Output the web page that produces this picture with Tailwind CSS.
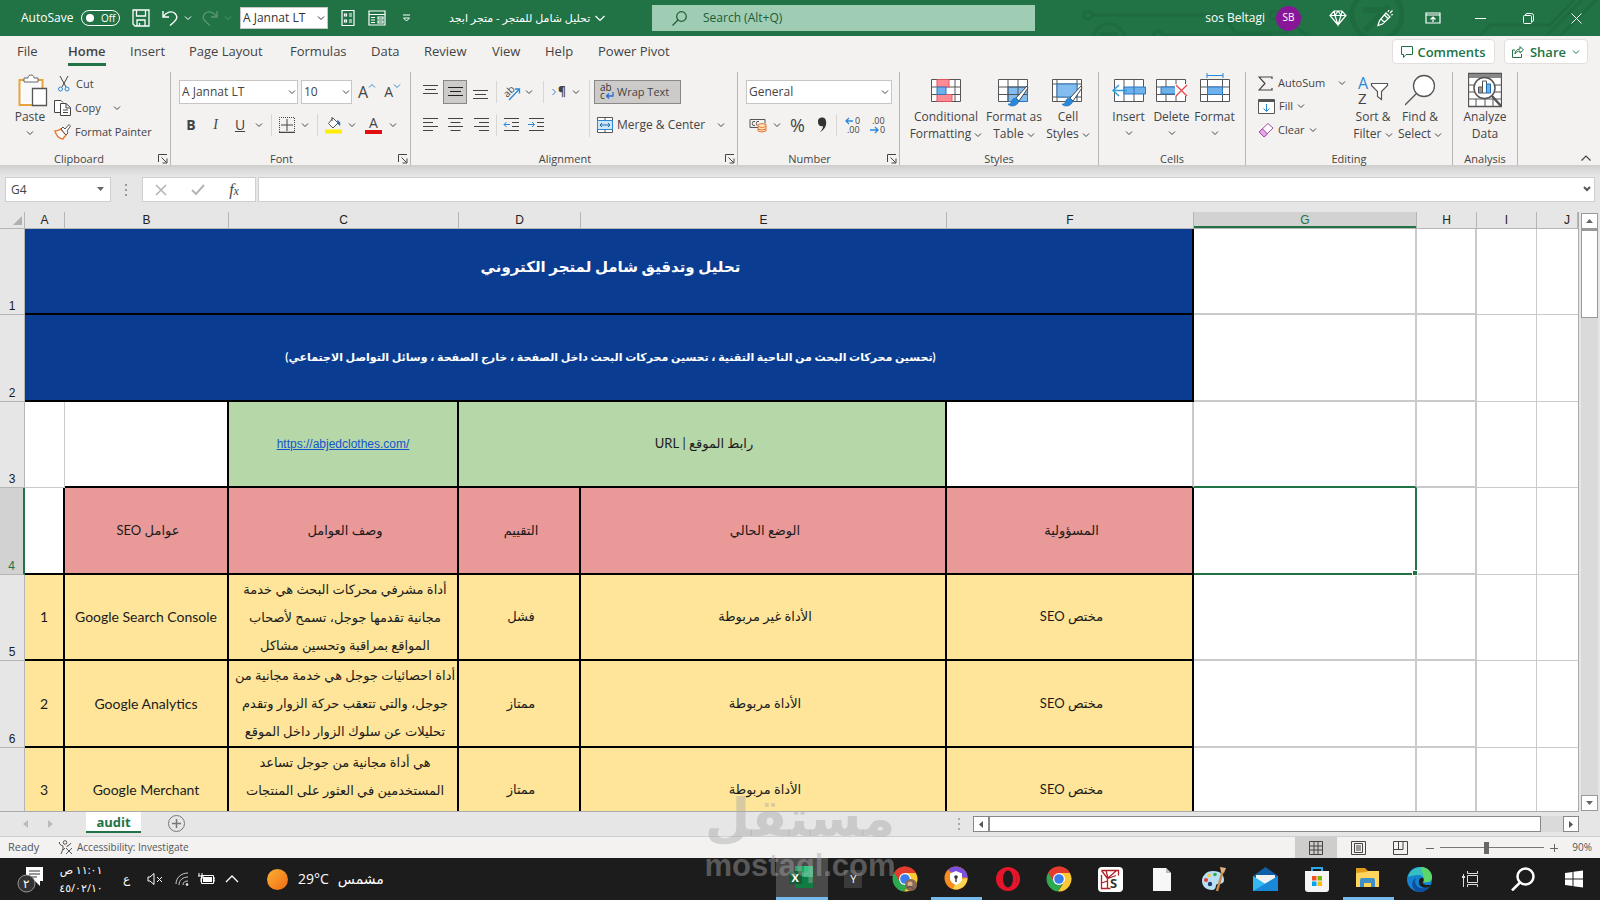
<!DOCTYPE html>
<html lang="en">
<head>
  <meta charset="UTF-8">
  <meta name="viewport" content="width=device-width, initial-scale=1.0">
  <title>تحليل شامل للمتجر - متجر ابجد</title>
  <script src="https://cdn.jsdelivr.net/npm/@tailwindcss/browser@4"></script>
</head>
<body class="h-screen overflow-hidden flex flex-col bg-[#e6e6e6] text-[#444] text-xs font-['Open_Sans','DejaVu_Sans',sans-serif]">

  <!-- shared icons -->
  <svg class="hidden">
    <symbol id="chev" viewBox="0 0 8 8"><path d="M1 2.500l3 3 3-3" fill="none" stroke="currentColor"/></symbol>
    <symbol id="launch" viewBox="0 0 10 10"><path d="M.5 8V.5H9M3.500 3.500l5 5M9 4.500V9H4.500" fill="none" stroke="currentColor"/></symbol>
    <symbol id="brush" viewBox="0 0 24 24"><path d="M22 1L11 13l3 3L23 3z" fill="#fff" stroke="#444"/><path d="M11 13c-4 0-4 3-5 5-1 1-2 1-3 1 2 3 9 3 11-3z" fill="#2b88d8" stroke="#1b6bb0" stroke-width=".7"/></symbol>
    <symbol id="chrome" viewBox="0 0 26 26">
      <path d="M13 13L2.200 6.800A12.500 12.500 0 0 1 23.800 6.800z" fill="#e33b2e"/>
      <path d="M13 13V.5M2.200 6.800A12.500 12.500 0 0 0 12 25.500L18 15z" fill="#2da94f"/>
      <path d="M13 7h10.900A12.500 12.500 0 0 1 12 25.500L18 16z" fill="#fcc934"/>
      <path d="M2.200 6.800A12.500 12.500 0 0 1 23.900 7H13l-5 9z" fill="#e33b2e"/>
      <circle cx="13" cy="13" r="6" fill="#fff"/><circle cx="13" cy="13" r="4.800" fill="#3b7ded"/>
    </symbol>
  </svg>

  <!-- title bar -->
  <header class="relative h-9 shrink-0 flex items-center bg-[#217346] text-white">
    <svg class="absolute right-0 top-0 h-9 w-[520px]" viewBox="0 0 520 36" fill="none" stroke="#1e6b40" stroke-width="3">
      <circle cx="8" cy="15" r="4"/><path d="M12 15h130l14 18h50l16-18"/><circle cx="29" cy="40" r="16"/><path d="M20 34h18"/><circle cx="78" cy="35" r="4"/><path d="M82 35h110"/>
      <circle cx="194" cy="15" r="4"/><path d="M198 17l30 18"/><circle cx="297" cy="15" r="25" stroke-width="5"/><path d="M283 10h26M309 6l-24 25" stroke-width="6"/>
      <path d="M400 36l10-11h60l24-25M466 36l36-36M480 36l36-36"/>
    </svg>
    <div class="relative flex items-center w-[420px] shrink-0 pl-[21px]">
      <label for="autosave" class="w-[60px]">AutoSave</label>
      <button id="autosave" class="w-[39px] h-4 rounded-full border border-white flex items-center gap-[7px] pl-1 text-[10px] leading-none"><span class="size-2 rounded-full bg-white"></span>Off</button>
      <button class="ml-3" aria-label="Save"><svg class="size-[18px]" viewBox="0 0 18 18" fill="none" stroke="#fff" stroke-width="1.300"><path d="M1 1h16v16H3l-2-2zM4.500 1v6h9V1M5 17v-6h8v6M7.500 17v-3"/></svg></button>
      <button class="ml-3" aria-label="Undo"><svg class="size-4" viewBox="0 0 16 16" fill="none" stroke="#fff" stroke-width="1.400"><path d="M1 1v6h6M1.500 6.500C4 2 10 .500 13 3.500s2 6-1 8.500l-4 3.500"/></svg></button>
      <svg class="size-2 ml-[6px]"><use href="#chev"/></svg>
      <button class="ml-[10px] opacity-25" aria-label="Redo"><svg class="size-4" viewBox="0 0 16 16" fill="none" stroke="#fff" stroke-width="1.400"><path d="M15 1v6H9M14.500 6.500C12 2 6 .500 3 3.500s-2 6 1 8.500l4 3.500"/></svg></button>
      <svg class="size-2 ml-[6px] opacity-25"><use href="#chev"/></svg>
      <div class="relative ml-2 text-[#333]">
        <select aria-label="Quick font" class="appearance-none w-[88px] h-[22px] bg-white border border-[#c8c8c8] px-[2px]"><option>A Jannat LT</option></select>
        <svg class="absolute right-[3px] top-[7px] size-2"><use href="#chev"/></svg>
      </div>
      <button class="ml-[13px]" aria-label="Form"><svg class="w-[14px] h-[18px]" viewBox="0 0 14 18" fill="none" stroke="#fff" stroke-width="1.200"><path d="M1 1.500h12v15H1zM3.500 5h2v2h-2zM3.500 11h2v2h-2zM8 5h3M8 7h3M8 11h3M8 13h3"/></svg></button>
      <button class="ml-[13px]" aria-label="Freeze panes"><svg class="w-[18px] h-4" viewBox="0 0 18 16" fill="none" stroke="#fff" stroke-width="1.200"><path d="M1 1h16v14H1zM1 4.500h16M3 7.500h4M3 10h4M3 12.500h4M10 7h5v2h-5zM10 11h5v2h-5z"/></svg></button>
      <button class="ml-4" aria-label="Customize"><svg class="size-[9px]" viewBox="0 0 9 9" fill="none" stroke="#fff"><path d="M1 1h7M1.500 4l3 3 3-3z"/></svg></button>
    </div>
    <button class="relative w-[232px] shrink-0 flex items-center gap-1 pl-[29px] text-[11px]"><span dir="rtl">تحليل شامل للمتجر - متجر ابجد</span><svg class="size-3" viewBox="0 0 12 12" fill="none" stroke="#fff" stroke-width="1.200"><path d="M1.500 4L6 8.500 10.500 4"/></svg></button>
    <div class="relative w-[383px] h-[26px] bg-[#9fcdb3] flex items-center gap-4 pl-5 text-[#1c5c39]">
      <svg class="size-[15px] shrink-0" viewBox="0 0 15 15" fill="none" stroke="currentColor" stroke-width="1.200"><circle cx="9.500" cy="5.500" r="4.800"/><path d="M6 9l-5.500 5.500"/></svg>
      <input type="text" aria-label="Search" placeholder="Search (Alt+Q)" class="flex-1 min-w-0 outline-none placeholder:text-[#1c5c39]">
    </div>
    <div class="relative ml-auto flex items-center shrink-0">
      <span>sos Beltagi</span>
      <span class="ml-[11px] size-[25px] rounded-full bg-[#881798] text-[10px] flex items-center justify-center">SB</span>
      <div class="ml-[13px] grid grid-cols-6 w-[286px] justify-items-center items-center">
        <button aria-label="Premium"><svg class="size-[18px]" viewBox="0 0 18 18" fill="none" stroke="#fff" stroke-width="1.200"><path d="M5 2h8l4 4.500L9 16 1 6.500zM1 6.500h16M5 2l1 4.500L9 16l3-9.500L13 2M9 2L6 6.500M9 2l3 4.500"/></svg></button>
        <button aria-label="What's new"><svg class="size-[18px]" viewBox="0 0 18 18" fill="none" stroke="#fff" stroke-width="1.200"><path d="M2 16.500l1.500-5L10 4l4 4-7.500 7-4.500 1.500zM5 10l3.500 3.500M8.500 6l4 4M12 3l1-2M14 4l2.500-2.500M15 6l2-.5"/></svg></button>
        <button aria-label="Ribbon display"><svg class="w-4 h-3" viewBox="0 0 16 12" fill="none" stroke="#fff" stroke-width="1.200"><path d="M1 1h14v10H1zM1 3h14M8 10V5M5.500 7.500L8 5l2.500 2.500"/></svg></button>
        <button aria-label="Minimize"><svg class="size-[11px]" viewBox="0 0 11 11" stroke="#fff"><path d="M0 5.500h11"/></svg></button>
        <button aria-label="Restore"><svg class="size-[11px]" viewBox="0 0 11 11" fill="none" stroke="#fff"><rect x=".5" y="2.500" width="8" height="8" rx="1"/><path d="M2.500 2.500V2q0-1.500 1.500-1.500h4.500q2 0 2 2V7q0 1.500-1.500 1.500"/></svg></button>
        <button aria-label="Close"><svg class="size-[11px]" viewBox="0 0 11 11" stroke="#fff"><path d="M.5.500l10 10M10.500.500l-10 10"/></svg></button>
      </div>
    </div>
  </header>

  <!-- ribbon tabs -->
  <nav class="h-8 shrink-0 flex items-start bg-[#f3f2f1] pl-[17px] pr-3 text-[13px] leading-[30px]">
    <a href="#" class="w-[51px]">File</a>
    <a href="#" class="w-[62px] font-semibold"><span class="inline-block h-[30px] border-b-3 border-[#217346]">Home</span></a>
    <a href="#" class="w-[59px]">Insert</a>
    <a href="#" class="w-[101px]">Page Layout</a>
    <a href="#" class="w-[81px]">Formulas</a>
    <a href="#" class="w-[53px]">Data</a>
    <a href="#" class="w-[68px]">Review</a>
    <a href="#" class="w-[53px]">View</a>
    <a href="#" class="w-[53px]">Help</a>
    <a href="#">Power Pivot</a>
    <div class="ml-auto flex gap-[9px] pt-[3px] text-[#217346] font-semibold">
      <button class="h-[25px] w-[103px] bg-white border border-[#e1dfdd] rounded-sm flex items-center justify-center gap-1"><svg class="size-3" viewBox="0 0 12 12" fill="none" stroke="currentColor"><path d="M.5.500h11v8H5l-2.500 3v-3h-2z"/></svg>Comments</button>
      <button class="h-[25px] w-[84px] bg-white border border-[#e1dfdd] rounded-sm flex items-center justify-between px-[7px]"><svg class="size-3" viewBox="0 0 12 12" fill="none" stroke="currentColor"><path d="M3 4H.5v7.500h9V8M3 8c0-3 2-5 5-5V.500L11.500 4 8 7V5C6 5 4 6 3 8z"/></svg>Share<svg class="size-2"><use href="#chev"/></svg></button>
    </div>
  </nav>

  <!-- ribbon -->
  <div class="h-[99px] shrink-0 flex pt-1 bg-[#f3f2f1] border-b-2 border-[#d2d0ce]">
    <section class="w-[171px] h-[93px] border-r border-[#b8b6b4] flex flex-col">
      <div class="h-[81px] flex">
        <button class="w-[54px] pl-[6px] flex flex-col items-center leading-[17px]">
          <svg class="w-[30px] h-9 ml-[5px]" viewBox="0 0 30 36"><path d="M1.500 8h23v25h-23z" fill="#fff" stroke="#e8a33d" stroke-width="2"/><path d="M5 11h16v19H5z" fill="#f9f9f9"/><path d="M6 10V6h4c0-4 6-4 6 0h4v4z" fill="#fff" stroke="#666"/><path d="M14.500 16.500h14v17h-14z" fill="#fff" stroke="#555" stroke-width="1.300"/></svg>
          Paste<svg class="size-2 mt-1"><use href="#chev"/></svg>
        </button>
        <div class="flex flex-col text-[11px] leading-6">
          <button class="flex items-center gap-[6px] pl-1"><svg class="w-3 h-4" viewBox="0 0 12 16" fill="none" stroke="#444"><path d="M2 0l6 11M10 0L4 11"/><circle cx="2.500" cy="13" r="2" stroke="#2b88d8"/><circle cx="9" cy="13" r="2" stroke="#2b88d8"/></svg>Cut</button>
          <button class="flex items-center gap-1"><svg class="w-[17px] h-4" viewBox="0 0 17 16" fill="#fff" stroke="#444"><path d="M6 12.500H.500V.500H7l2 2"/><path d="M6.500 3.500H12l4.500 4V15.500h-10zM12 4v4h4M9 10h5M9 12.500h5"/></svg>Copy<svg class="size-2 ml-2"><use href="#chev"/></svg></button>
          <button class="flex items-center gap-1"><svg class="w-[17px] h-4" viewBox="0 0 17 16" fill="#fff" stroke="#555"><path d="M1 7c3 0 4-1 6-2l5 6c-2 2-3 4-3 4-4 0-7-4-8-8z" stroke="#e8762d" stroke-width="1.400"/><path d="M7 5l2-2 2 2 4-4.500 1.500 1.500L13 7l1 2-2 2z"/></svg>Format Painter</button>
        </div>
      </div>
      <div class="flex items-center text-[11px] leading-3 pr-[2px]"><span class="flex-1 text-center">Clipboard</span><svg class="size-[10px]"><use href="#launch"/></svg></div>
    </section>

    <section class="w-[240px] h-[93px] border-r border-[#b8b6b4] flex flex-col">
      <div class="h-[81px] pt-2 pl-2 flex flex-col gap-[9px]">
        <div class="flex items-center h-6">
          <div class="relative"><select aria-label="Font" class="appearance-none w-[119px] h-6 bg-white border border-[#c8c6c4] px-[2px]"><option>A Jannat LT</option></select><svg class="absolute right-[2px] top-2 size-2"><use href="#chev"/></svg></div>
          <div class="relative ml-[3px]"><select aria-label="Font size" class="appearance-none w-[51px] h-6 bg-white border border-[#c8c6c4] px-[2px]"><option>10</option></select><svg class="absolute right-[2px] top-2 size-2"><use href="#chev"/></svg></div>
          <button class="ml-[6px] text-base flex items-start leading-5">A<svg class="size-2 text-[#2b88d8] rotate-180"><use href="#chev"/></svg></button>
          <button class="ml-2 text-sm flex items-start leading-5">A<svg class="size-2 text-[#2b88d8]"><use href="#chev"/></svg></button>
        </div>
        <div class="flex items-center h-6 text-sm">
          <button class="w-6 font-bold">B</button>
          <button class="w-[25px] italic font-['Liberation_Serif']">I</button>
          <button class="w-6 underline">U</button>
          <svg class="size-2 ml-[3px]"><use href="#chev"/></svg>
          <span class="w-px h-[22px] ml-2 bg-[#d8d6d4]"></span>
          <button class="ml-[7px]" aria-label="Borders"><svg class="size-4" viewBox="0 0 16 16" fill="none" stroke="#444"><path d="M.5 15V.500h15V15" stroke-dasharray="1 1"/><path d="M0 15.500h16" stroke-width="1.500"/><path d="M8 2v12M2 8h12"/></svg></button>
          <svg class="size-2 ml-[6px]"><use href="#chev"/></svg>
          <span class="w-px h-[22px] ml-2 bg-[#d8d6d4]"></span>
          <button class="ml-[7px]" aria-label="Fill color"><svg class="w-[17px] h-[18px]" viewBox="0 0 17 18"><path d="M8 2l5 5-5 5-4.500-4.500zM7 1v4" fill="#fff" stroke="#555"/><path d="M12 4c3 1 4 3 3 6l-2-2z" fill="#2b6cb0"/><path d="M0 13.500h17v4H0z" fill="#ffee00"/></svg></button>
          <svg class="size-2 ml-[6px]"><use href="#chev"/></svg>
          <button class="ml-[9px] w-[17px] h-[18px] border-b-4 border-[#e01010] leading-[14px]">A</button>
          <svg class="size-2 ml-[7px]"><use href="#chev"/></svg>
        </div>
      </div>
      <div class="flex items-center text-[11px] leading-3 pr-[2px]"><span class="flex-1 text-center pr-[6px]">Font</span><svg class="size-[10px]"><use href="#launch"/></svg></div>
    </section>

    <section class="w-[327px] h-[93px] border-r border-[#b8b6b4] flex flex-col">
      <div class="h-[81px] pt-2 pl-2 flex">
        <div class="w-[171px] border-r border-[#d8d6d4] h-[57px] flex flex-col gap-[9px]">
          <div class="flex items-center h-6">
            <button class="w-6 h-6 grid place-items-center" aria-label="Top align"><svg class="size-4" viewBox="0 0 16 16" stroke="#444"><path d="M0 1.500h15M2 5.500h11M0 9.500h15"/></svg></button>
            <button class="w-6 h-6 grid place-items-center bg-[#cdcbc9] border border-[#8a8886]" aria-label="Middle align"><svg class="size-4" viewBox="0 0 16 16" stroke="#222"><path d="M1 3.500h15M3 7.500h11M1 11.500h15"/></svg></button>
            <button class="w-[26px] h-6 grid place-items-center" aria-label="Bottom align"><svg class="size-4" viewBox="0 0 16 16" stroke="#444"><path d="M1 6.500h15M3 10.500h11M1 14.500h15"/></svg></button>
            <span class="w-px h-[22px] ml-[3px] bg-[#d8d6d4]"></span>
            <button class="ml-[6px]" aria-label="Orientation"><svg class="size-[18px] overflow-visible" viewBox="0 0 18 18"><text x="1" y="13" font-size="10" fill="#444" transform="rotate(-45 5 10)">ab</text><path d="M6 17L16.500 6M12 6h4.500v4.500" fill="none" stroke="#2b88d8" stroke-width="1.300"/></svg></button>
            <svg class="size-2 ml-1"><use href="#chev"/></svg>
            <span class="w-px h-[22px] ml-[10px] bg-[#d8d6d4]"></span>
            <button class="ml-[6px] flex items-center font-bold" aria-label="Text direction"><svg class="size-2 -rotate-90 text-[#2b88d8]"><use href="#chev"/></svg>¶</button>
            <svg class="size-2 ml-[6px]"><use href="#chev"/></svg>
          </div>
          <div class="flex items-center h-6">
            <button class="w-6 grid place-items-center" aria-label="Align left"><svg class="size-4" viewBox="0 0 16 16" stroke="#444"><path d="M0 1.500h15M0 5.500h10M0 9.500h15M0 13.500h10"/></svg></button>
            <button class="w-[26px] grid place-items-center" aria-label="Center"><svg class="size-4" viewBox="0 0 16 16" stroke="#444"><path d="M0 1.500h15M2.500 5.500h10M0 9.500h15M2.500 13.500h10"/></svg></button>
            <button class="w-6 grid place-items-center" aria-label="Align right"><svg class="size-4" viewBox="0 0 16 16" stroke="#444"><path d="M1 1.500h15M6 5.500h10M1 9.500h15M6 13.500h10"/></svg></button>
            <span class="w-px h-[22px] ml-[3px] bg-[#d8d6d4]"></span>
            <button class="ml-[6px]" aria-label="Decrease indent"><svg class="size-4" viewBox="0 0 16 16" fill="none" stroke="#444"><path d="M1 1.500h15M9 5.500h7M9 9.500h7M1 13.500h15"/><path d="M7 7.500H1M3.500 5L1 7.500 3.500 10" stroke="#2b88d8"/></svg></button>
            <button class="ml-[9px]" aria-label="Increase indent"><svg class="size-4" viewBox="0 0 16 16" fill="none" stroke="#444"><path d="M1 1.500h15M9 5.500h7M9 9.500h7M1 13.500h15"/><path d="M0 7.500h6M4 5l2.500 2.500L4 10" stroke="#2b88d8"/></svg></button>
          </div>
        </div>
        <div class="pl-1 flex flex-col items-start gap-[9px]">
          <button class="h-6 w-[87px] flex items-center gap-[2px] pl-1 bg-[#cdcbc9] border border-[#8a8886] text-[11px]"><svg class="size-4 shrink-0 overflow-visible" viewBox="0 0 16 16"><text x="1" y="7" font-size="10" fill="#333">ab</text><text x="1" y="15" font-size="10" fill="#333">c</text><path d="M14 8v4H8M10 9.500L7.500 12l2.500 2.500" fill="none" stroke="#2b6cd8" stroke-width="1.300"/></svg><span class="whitespace-nowrap">Wrap Text</span></button>
          <button class="h-6 flex items-center gap-1 pl-[3px]"><svg class="size-4" viewBox="0 0 16 16" fill="#fff" stroke="#555"><path d="M.5.500h15v15H.500zM8 .500v3M8 12.500v3"/><path d="M.5 3.500h15v9H.500z" fill="#cfe6f7" stroke="#2b88d8"/><path d="M3 8h10M5 6L3 8l2 2M11 6l2 2-2 2" stroke="#1b6bb0" fill="none"/></svg><span>Merge &amp; Center</span><svg class="size-2 ml-2"><use href="#chev"/></svg></button>
        </div>
      </div>
      <div class="flex items-center text-[11px] leading-3 pr-[2px]"><span class="flex-1 text-center pr-[6px]">Alignment</span><svg class="size-[10px]"><use href="#launch"/></svg></div>
    </section>

    <section class="w-[162px] h-[93px] border-r border-[#b8b6b4] flex flex-col">
      <div class="h-[81px] pt-2 pl-2 flex flex-col gap-[9px]">
        <div class="relative w-[146px]"><select aria-label="Number format" class="appearance-none w-full h-6 bg-white border border-[#c8c6c4] px-[2px]"><option>General</option></select><svg class="absolute right-[3px] top-2 size-2"><use href="#chev"/></svg></div>
        <div class="flex items-center h-6">
          <button class="ml-[3px]" aria-label="Accounting"><svg class="w-[18px] h-4" viewBox="0 0 18 16" fill="none" stroke="#555"><path d="M9 10.500H1v-8h15v4M6 4.500H4q-1.500 2 0 4h2M10 4.500H8q-1.500 2 0 4"/><path d="M9 7.500q4-2 8 0v6.500q-4 2-8 0zM9 9.500q4 2 8 0M9 12q4 2 8 0" fill="#fce4c8" stroke="#e8762d"/></svg></button>
          <svg class="size-2 ml-[6px]"><use href="#chev"/></svg>
          <button class="ml-[9px] text-lg leading-6">%</button>
          <button class="ml-3" aria-label="Comma style"><svg class="w-[10px] h-4" viewBox="0 0 10 16" fill="#333"><path d="M1 5a4 4 0 0 1 8-1c1 5-2 9-6 11 2-2 3-4 3-6-3 1-5-1-5-4z"/></svg></button>
          <span class="w-px h-[22px] ml-[9px] bg-[#d8d6d4]"></span>
          <button class="ml-2" aria-label="Increase decimal"><svg class="size-[17px] overflow-visible" viewBox="0 0 17 17"><text x="10" y="7" font-size="9" fill="#444">0</text><text x="2" y="16" font-size="9" fill="#444">.00</text><path d="M8 4H1M4 1L1 4l3 3" fill="none" stroke="#2b88d8" stroke-width="1.300"/></svg></button>
          <button class="ml-2" aria-label="Decrease decimal"><svg class="size-[17px] overflow-visible" viewBox="0 0 17 17"><text x="2" y="7" font-size="9" fill="#444">.00</text><text x="10" y="16" font-size="9" fill="#444">0</text><path d="M0 13h8M5 10l3 3-3 3" fill="none" stroke="#2b88d8" stroke-width="1.300"/></svg></button>
        </div>
      </div>
      <div class="flex items-center text-[11px] leading-3 pr-[2px]"><span class="flex-1 text-center pr-[6px]">Number</span><svg class="size-[10px]"><use href="#launch"/></svg></div>
    </section>

    <section class="w-[199px] h-[93px] border-r border-[#b8b6b4] flex flex-col">
      <div class="h-[81px] flex pl-[7px] leading-[17px]">
        <button class="w-[78px] flex flex-col items-center whitespace-nowrap">
          <svg class="w-[30px] h-9" viewBox="0 0 30 36" fill="#fff" stroke="#555"><path d="M.5 7.500h29v22H.500zM.5 15h29M.5 22.500h29M24 7.500v22"/><path d="M6 7.500h12V15H6zM6 22.500h15v7H6z" fill="#ff8b94" stroke="#e0525e"/><path d="M6 15h9v7.500H6z" fill="#6fb1ea" stroke="#2b78c0"/></svg>
          <span>Conditional</span><span>Formatting <svg class="inline size-2"><use href="#chev"/></svg></span>
        </button>
        <button class="w-[58px] flex flex-col items-center whitespace-nowrap">
          <svg class="w-8 h-9" viewBox="0 0 32 36" fill="#fff" stroke="#555"><path d="M.5 7.500h29v22H.500z"/><path d="M10 15h19.500v14.500H10z" fill="#83bdf0" stroke="#2b78c0"/><path d="M.5 15h29M.5 22.500h29M10 7.500v22M20 7.500v22" fill="none"/><use href="#brush" x="7" y="13" width="24" height="24"/></svg>
          <span>Format as</span><span>Table <svg class="inline size-2"><use href="#chev"/></svg></span>
        </button>
        <button class="w-[50px] flex flex-col items-center whitespace-nowrap">
          <svg class="w-8 h-9" viewBox="0 0 32 36" fill="#fff" stroke="#555"><path d="M.5 7.500h29v22H.500zM.5 12h29M.5 25h29M5 7.500v22M25 7.500v22"/><path d="M5 12h20v13H5z" fill="#83bdf0" stroke="#2b78c0"/><use href="#brush" x="7" y="13" width="24" height="24"/></svg>
          <span>Cell</span><span>Styles <svg class="inline size-2"><use href="#chev"/></svg></span>
        </button>
      </div>
      <div class="text-[11px] leading-3 text-center">Styles</div>
    </section>

    <section class="w-[147px] h-[93px] border-r border-[#b8b6b4] flex flex-col">
      <div class="h-[81px] flex pl-2 leading-[17px]">
        <button class="w-[43px] flex flex-col items-center">
          <svg class="w-[34px] h-9" viewBox="0 0 34 36" fill="#fff" stroke="#555"><path d="M2.500 7.500h29v22h-29zM12 7.500v22M22 7.500v22"/><path d="M12 15h21.500v7H12z" fill="#6fb1ea" stroke="#2b78c0"/><path d="M22 15v7" stroke="#2b78c0"/><path d="M15 18.500H1M7 13l-6 5.500L7 24" fill="none" stroke="#2b9be0" stroke-width="1.500"/></svg>
          Insert<svg class="size-2 mt-1"><use href="#chev"/></svg>
        </button>
        <button class="w-[43px] flex flex-col items-center">
          <svg class="w-8 h-9" viewBox="0 0 32 36" fill="#fff" stroke="#555"><path d="M.5 7.500h29v22H.500zM.5 15h29M.5 22.500h29M10 7.500v22M20 7.500v22"/><path d="M5 15h16v7H5z" fill="#6fb1ea" stroke="#2b78c0"/><path d="M19 12h11v12H19z" stroke="none"/><path d="M20 13l11 11M31 13L20 24" stroke="#e8484f" stroke-width="1.400"/></svg>
          Delete<svg class="size-2 mt-1"><use href="#chev"/></svg>
        </button>
        <button class="w-[43px] flex flex-col items-center">
          <svg class="w-[30px] h-9" viewBox="0 0 30 36" fill="#fff" stroke="#555"><path d="M7 3.500h16M7 1v5M23 1v5" stroke="#2b88d8"/><path d="M.5 7.500h29v22H.500zM.5 15h29M.5 22.500h29M7.500 7.500v22M22.500 7.500v22"/><path d="M7.500 15h15v7.500h-15z" fill="#6fb1ea" stroke="#2b78c0"/></svg>
          Format<svg class="size-2 mt-1"><use href="#chev"/></svg>
        </button>
      </div>
      <div class="text-[11px] leading-3 text-center">Cells</div>
    </section>

    <section class="w-[207px] h-[93px] border-r border-[#b8b6b4] flex flex-col">
      <div class="h-[81px] flex">
        <div class="w-[104px] pl-3 flex flex-col items-start text-[11px] leading-6 whitespace-nowrap">
          <button class="h-[22px] flex items-center gap-[5px]"><svg class="size-[15px]" viewBox="0 0 15 15" fill="none" stroke="#444" stroke-width="1.200"><path d="M14 3V1H1l6 6.500L1 14h13v-2"/></svg>AutoSum<svg class="size-2 ml-2"><use href="#chev"/></svg></button>
          <button class="h-6 flex items-center gap-1"><svg class="w-[17px] h-[15px]" viewBox="0 0 17 15" fill="#fff" stroke="#555"><path d="M.5.500h16v14H.500z"/><path d="M1 2h15" stroke-width="2"/><path d="M8.500 5v7M5.500 9.500l3 3 3-3" fill="none" stroke="#2b88d8"/></svg>Fill<svg class="size-2"><use href="#chev"/></svg></button>
          <button class="h-6 flex items-center gap-1"><svg class="w-4 h-[15px]" viewBox="0 0 16 15" fill="#fff" stroke="#a349a4"><path d="M1 9l9-8.500L15 5l-9 9z"/><path d="M1 9l3.500-3.300L9.500 11 6 14z" fill="#e3a6e8"/></svg>Clear<svg class="size-2"><use href="#chev"/></svg></button>
        </div>
        <button class="w-[46px] flex flex-col items-center leading-[17px] whitespace-nowrap">
          <svg class="w-[30px] h-9 overflow-visible" viewBox="0 0 30 36"><text x="0" y="17" font-size="16" fill="#2b88d8">A</text><text x="0" y="32" font-size="15" fill="#444">Z</text><path d="M13.500 11.500h16v2l-6 6v8l-4-3v-5l-6-6z" fill="#fff" stroke="#555" stroke-width="1.200"/></svg>
          <span>Sort &amp;</span><span>Filter <svg class="inline size-2"><use href="#chev"/></svg></span>
        </button>
        <button class="w-[48px] flex flex-col items-center leading-[17px] whitespace-nowrap">
          <svg class="w-[30px] h-9" viewBox="0 0 30 36" fill="#fff" stroke="#555" stroke-width="1.300"><circle cx="19" cy="14" r="10.500"/><path d="M11.500 21.500L0 33"/></svg>
          <span>Find &amp;</span><span>Select <svg class="inline size-2"><use href="#chev"/></svg></span>
        </button>
      </div>
      <div class="text-[11px] leading-3 text-center">Editing</div>
    </section>

    <section class="w-[65px] h-[93px] border-r border-[#b8b6b4] flex flex-col">
      <button class="h-[81px] flex flex-col items-center leading-[17px]">
        <svg class="w-[34px] h-9" viewBox="0 0 34 36" fill="#fff" stroke="#555"><path d="M.5 1.500h33v33H.500z" stroke-width="1.300"/><path d="M1 4h32" stroke="#888" stroke-width="4"/><path d="M1 13h32M1 20h32M1 27h32M8 27v7M17 27v7M25 27v7"/><circle cx="16.500" cy="16" r="10.500" stroke-width="1.500"/><path d="M24 24l9 10" stroke-width="2.500"/><path d="M10.500 15h4v6h-4z" fill="#999"/><path d="M14.500 9h4v12h-4z"/><path d="M18.500 12h4v9h-4z" fill="#6fb1ea" stroke="#1b6bb0"/></svg>
        <span>Analyze</span><span>Data</span>
      </button>
      <div class="text-[11px] leading-3 text-center">Analysis</div>
    </section>
    <button class="ml-auto self-end mr-2" aria-label="Collapse ribbon"><svg class="size-3" viewBox="0 0 12 12" fill="none" stroke="#444" stroke-width="1.200"><path d="M1.500 7.500L6 3l4.500 4.500"/></svg></button>
  </div>

  <!-- formula bar -->
  <div class="h-[45px] shrink-0 flex items-center px-[5px] bg-linear-to-b from-[#d4d4d4] to-[#e6e6e6] to-20%">
    <div class="relative">
      <input type="text" aria-label="Name box" value="G4" class="w-[106px] h-[25px] bg-white border border-[#cfcfcf] px-[5px]">
      <svg class="absolute right-[7px] top-[10px] w-[7px] h-[5px]" viewBox="0 0 7 5" fill="#666"><path d="M0 0h7L3.500 4z"/></svg>
    </div>
    <svg class="w-[3px] h-3 ml-[14px]" viewBox="0 0 3 12" fill="#999"><path d="M0 0h2v2H0zM0 5h2v2H0zM0 10h2v2H0z"/></svg>
    <div class="ml-[14px] w-[114px] h-[25px] bg-white border border-[#cfcfcf] flex items-center justify-around pr-1">
      <button aria-label="Cancel"><svg class="size-3" viewBox="0 0 12 12" stroke="#b5b5b5" stroke-width="1.600"><path d="M1 1l10 10M11 1L1 11"/></svg></button>
      <button aria-label="Enter"><svg class="w-[14px] h-3" viewBox="0 0 14 12" fill="none" stroke="#b5b5b5" stroke-width="2"><path d="M1 6l4 4 8-9"/></svg></button>
      <button class="italic text-base leading-5 font-['Liberation_Serif']">f<span class="text-xs">x</span></button>
    </div>
    <div class="relative flex-1 ml-[2px]">
      <input type="text" aria-label="Formula" class="w-full h-[25px] bg-white border border-[#cfcfcf] px-1">
      <svg class="absolute right-1 top-[9px] w-2 h-[6px]" viewBox="0 0 8 6" fill="none" stroke="#555" stroke-width="2"><path d="M1 1l3 3 3-3"/></svg>
    </div>
  </div>

  <!-- sheet -->
  <main class="flex-1 min-h-0 flex">
    <div class="flex-1 overflow-hidden border-r border-b border-[#ababab]">
      <table class="table-fixed w-full border-separate border-spacing-0 text-center text-[13px] text-[#1b1b1b] font-['Lato','DejaVu_Sans',sans-serif]">
        <colgroup>
          <col class="w-[25px]"><col class="w-10"><col class="w-[164px]"><col class="w-[230px]"><col class="w-[122px]"><col class="w-[366px]"><col class="w-[247px]"><col class="w-[223px]"><col class="w-[60px]"><col class="w-[60px]"><col>
        </colgroup>
        <thead class="bg-[#e6e6e6] font-['Liberation_Sans'] text-xs leading-4 text-[#222]">
          <tr class="[&>th]:font-normal [&>th]:p-0 [&>th]:h-4 [&>th]:border-r [&>th]:border-b [&>th]:border-[#b5b5b5]">
            <th><svg class="size-[9px] ml-auto mr-[2px]" viewBox="0 0 9 9" fill="#b0b0b0"><path d="M9 0v9H0z"/></svg></th>
            <th>A</th><th>B</th><th>C</th><th>D</th><th>E</th><th>F</th>
            <th class="bg-[#d2d2d2] text-[#217346] shadow-[inset_0_-2px_0_#217346]">G</th>
            <th>H</th><th>I</th><th><div class="pl-5">J</div></th>
          </tr>
        </thead>
        <tbody class="[&>tr>th]:bg-[#e6e6e6] [&>tr>th]:font-['Liberation_Sans'] [&>tr>th]:text-xs [&>tr>th]:font-normal [&>tr>th]:align-bottom [&>tr>th]:border-r [&>tr>th]:border-b [&>tr>th]:border-[#b5b5b5] [&>tr>th]:leading-4 [&_td]:p-0 [&>tr>td]:border-[#cacaca]">
          <tr class="odd:h-[86px] even:h-[87px]">
            <th>1</th>
            <td colspan="6" dir="rtl" class="bg-[#0a3d91] border-b-2 border-r-2 border-black! text-white font-bold text-[15px] pb-2!">تحليل وتدقيق شامل لمتجر الكتروني</td>
            <td class="bg-white border-r-2 border-b-2"></td><td class="bg-white border-r-2 border-b-2"></td><td class="bg-white border-r border-b"></td><td class="bg-white border-b"></td>
          </tr>
          <tr class="odd:h-[86px] even:h-[87px]">
            <th>2</th>
            <td colspan="6" dir="rtl" class="bg-[#0a3d91] border-b-2 border-r-2 border-black! text-white font-bold text-[11px]">(تحسين محركات البحث من الناحية التقنية ، تحسين محركات البحث داخل الصفحة ، خارج الصفحة ، وسائل التواصل الاجتماعي)</td>
            <td class="bg-white border-r-2 border-b-2"></td><td class="bg-white border-r-2 border-b-2"></td><td class="bg-white border-r border-b"></td><td class="bg-white border-b"></td>
          </tr>
          <tr class="odd:h-[86px] even:h-[87px]">
            <th>3</th>
            <td class="bg-white border-r border-b"></td>
            <td class="bg-white border-r-2 border-b-2 border-black!"></td>
            <td class="bg-[#b6d7a8] border-r-2 border-b-2 border-black! text-xs font-['Liberation_Sans']"><a href="#" class="text-[#1155cc] underline">https://abjedclothes.com/</a></td>
            <td colspan="2" dir="rtl" class="bg-[#b6d7a8] border-r-2 border-b-2 border-black!">رابط الموقع | URL</td>
            <td class="bg-white border-r-2 border-b-2 border-b-black!"></td>
            <td class="bg-white border-r-2 border-b-2 border-b-[#217346]!"></td><td class="bg-white border-r-2 border-b-2"></td><td class="bg-white border-r border-b"></td><td class="bg-white border-b"></td>
          </tr>
          <tr class="odd:h-[86px] even:h-[87px] [&>.h]:bg-[#ea9999] [&>.h]:border-r-2 [&>.h]:border-b-2 [&>.h]:border-black!">
            <th class="bg-[#d2d2d2]! text-[#217346] border-r-2! border-r-[#217346]!">4</th>
            <td class="bg-white border-r-2 border-b-2 border-black!"></td>
            <td class="h" dir="rtl">عوامل SEO</td>
            <td class="h" dir="rtl">وصف العوامل</td>
            <td class="h" dir="rtl">التقييم</td>
            <td class="h" dir="rtl">الوضع الحالي</td>
            <td class="h border-r-[#217346]!" dir="rtl">المسؤولية</td>
            <td class="relative bg-white border-r-2 border-b-2 border-[#217346]!"><span class="absolute -right-[3px] -bottom-[3px] size-[6px] bg-[#217346] border border-white"></span></td>
            <td class="bg-white border-r-2 border-b-2"></td><td class="bg-white border-r border-b"></td><td class="bg-white border-b"></td>
          </tr>
          <tr class="odd:h-[86px] even:h-[87px] [&>.c]:bg-[#ffe599] [&>.c]:border-r-2 [&>.c]:border-b-2 [&>.c]:border-black!">
            <th>5</th>
            <td class="c text-sm">1</td><td class="c text-sm">Google Search Console</td>
            <td class="c align-top" dir="rtl"><div class="h-[84px] overflow-hidden whitespace-nowrap leading-7">أداة مشرفي محركات البحث هي خدمة<br>مجانية تقدمها جوجل، تسمح لأصحاب<br>المواقع بمراقبة وتحسين مشاكل</div></td>
            <td class="c" dir="rtl">فشل</td><td class="c" dir="rtl">الأداة غير مربوطة</td><td class="c" dir="rtl">مختص SEO</td>
            <td class="bg-white border-r-2 border-b-2"></td><td class="bg-white border-r-2 border-b-2"></td><td class="bg-white border-r border-b"></td><td class="bg-white border-b"></td>
          </tr>
          <tr class="odd:h-[86px] even:h-[87px] [&>.c]:bg-[#ffe599] [&>.c]:border-r-2 [&>.c]:border-b-2 [&>.c]:border-black!">
            <th>6</th>
            <td class="c text-sm">2</td><td class="c text-sm">Google Analytics</td>
            <td class="c align-top" dir="rtl"><div class="h-[84px] overflow-hidden whitespace-nowrap leading-7">أداة احصائيات جوجل هي خدمة مجانية من<br>جوجل، والتي تتعقب حركة الزوار وتقدم<br>تحليلات عن سلوك الزوار داخل الموقع</div></td>
            <td class="c" dir="rtl">ممتاز</td><td class="c" dir="rtl">الأداة مربوطة</td><td class="c" dir="rtl">مختص SEO</td>
            <td class="bg-white border-r-2 border-b-2"></td><td class="bg-white border-r-2 border-b-2"></td><td class="bg-white border-r border-b"></td><td class="bg-white border-b"></td>
          </tr>
          <tr class="odd:h-[86px] even:h-[87px] [&>.c]:bg-[#ffe599] [&>.c]:border-r-2 [&>.c]:border-b-2 [&>.c]:border-black!">
            <th>7</th>
            <td class="c text-sm">3</td><td class="c text-sm">Google Merchant</td>
            <td class="c align-top" dir="rtl"><div class="h-[84px] overflow-hidden whitespace-nowrap leading-7">هي أداة مجانية من جوجل تساعد<br>المستخدمين في العثور على المنتجات</div></td>
            <td class="c" dir="rtl">ممتاز</td><td class="c" dir="rtl">الأداة مربوطة</td><td class="c" dir="rtl">مختص SEO</td>
            <td class="bg-white border-r-2 border-b-2"></td><td class="bg-white border-r-2 border-b-2"></td><td class="bg-white border-r border-b"></td><td class="bg-white border-b"></td>
          </tr>
        </tbody>
      </table>
    </div>
    <div class="w-[17px] mx-[2px] my-[1px] bg-[#dadada] flex flex-col">
      <button class="h-4 bg-white border border-[#999] grid place-items-center" aria-label="Scroll up"><svg class="w-[7px] h-1" viewBox="0 0 7 4" fill="#666"><path d="M0 4h7L3.500 0z"/></svg></button>
      <div class="h-[89px] bg-white border border-t-2 border-[#999]"></div>
      <button class="mt-auto h-4 bg-white border border-[#999] grid place-items-center" aria-label="Scroll down"><svg class="w-[7px] h-1" viewBox="0 0 7 4" fill="#666"><path d="M0 0h7L3.500 4z"/></svg></button>
    </div>
  </main>

  <!-- sheet tabs -->
  <div class="h-6 shrink-0 flex items-start pr-[21px]">
    <div class="w-[86px] h-6 flex items-center gap-5 pl-[23px]">
      <button aria-label="Previous sheet"><svg class="w-[5px] h-2" viewBox="0 0 5 8" fill="#bbb"><path d="M5 0v8L0 4z"/></svg></button>
      <button aria-label="Next sheet"><svg class="w-[5px] h-2" viewBox="0 0 5 8" fill="#bbb"><path d="M0 0v8l5-4z"/></svg></button>
    </div>
    <button class="w-[55px] h-[21px] bg-white border-b-2 border-[#217346] text-[#217346] font-bold text-[13px] leading-[18px]">audit</button>
    <button class="ml-[27px] mt-[3px]" aria-label="New sheet"><svg class="size-[17px]" viewBox="0 0 17 17" fill="none" stroke="#777"><circle cx="8.500" cy="8.500" r="8"/><path d="M8.500 4v9M4 8.500h9" stroke-width="1.500"/></svg></button>
    <svg class="w-[3px] h-3 ml-auto mr-[12px] mt-[6px]" viewBox="0 0 3 12" fill="#aaa"><path d="M0 0h2v2H0zM0 5h2v2H0zM0 10h2v2H0z"/></svg>
    <div class="w-[606px] h-4 mt-1 flex bg-[#dadada]">
      <button class="w-4 bg-white border border-[#888] grid place-items-center" aria-label="Scroll left"><svg class="w-1 h-[7px]" viewBox="0 0 4 7" fill="#555"><path d="M4 0v7L0 3.500z"/></svg></button>
      <div class="w-[552px] bg-white border border-[#888]"></div>
      <button class="ml-auto w-4 bg-white border border-[#888] grid place-items-center" aria-label="Scroll right"><svg class="w-1 h-[7px]" viewBox="0 0 4 7" fill="#555"><path d="M0 0v7l4-3.500z"/></svg></button>
    </div>
  </div>

  <!-- status bar -->
  <footer class="h-[22px] shrink-0 flex items-center bg-[#f3f2f1] border-t border-[#cfcfcf] px-2 text-[10px] text-[#555]">
    <span class="w-[50px] text-[11px]">Ready</span>
    <button class="flex items-center gap-1"><svg class="size-[15px]" viewBox="0 0 15 15" fill="none" stroke="#555"><circle cx="7" cy="2.500" r="1.800"/><path d="M1 3c1 2 3 2.500 4 3v3L3 14M13 3c-1 2-3 2.500-4 3v1M1 3l1-1M5 10l2-2M8 8l6 6M14 8l-6 6"/></svg>Accessibility: Investigate</button>
    <div class="ml-auto flex items-center h-full">
      <button class="w-[42px] h-full bg-[#cfcdcc] grid place-items-center" aria-label="Normal"><svg class="size-[14px]" viewBox="0 0 14 14" fill="none" stroke="#444"><path d="M.5.500h13v13H.500zM.5 5h13M.5 9h13M5 .500v13M9 .500v13"/></svg></button>
      <button class="w-[42px] grid place-items-center" aria-label="Page layout"><svg class="w-[15px] h-[14px]" viewBox="0 0 15 14" fill="none" stroke="#444"><path d="M.5.500h14v13H.500zM3.500 2.500h8v9h-8zM5 5h5M5 7h5M5 9h5"/></svg></button>
      <button class="w-[42px] grid place-items-center" aria-label="Page break preview"><svg class="w-[15px] h-[14px]" viewBox="0 0 15 14" fill="none" stroke="#444"><path d="M.5.500h14v13H.500zM.5 8.500h9.500v-8M5.500.500v8"/></svg></button>
      <button class="ml-[5px]" aria-label="Zoom out"><svg class="size-2" viewBox="0 0 8 8" stroke="#666"><path d="M0 4.500h8"/></svg></button>
      <input type="range" aria-label="Zoom" min="0" max="100" value="44" class="ml-[6px] w-[104px] appearance-none h-px bg-[#777] [&::-webkit-slider-thumb]:appearance-none [&::-webkit-slider-thumb]:w-[5px] [&::-webkit-slider-thumb]:h-3 [&::-webkit-slider-thumb]:bg-[#666]">
      <button class="ml-[6px]" aria-label="Zoom in"><svg class="size-2" viewBox="0 0 8 8" stroke="#666"><path d="M0 4.500h8M4.500 0v8"/></svg></button>
      <span class="ml-[14px]">90%</span>
    </div>
  </footer>

  <!-- taskbar -->
  <div class="h-[42px] shrink-0 flex items-center bg-[#1c1c1c] text-white">
    <button class="ml-[17px] w-[28px]" aria-label="Notifications"><svg class="w-[27px] h-[27px]" viewBox="0 0 27 27"><path d="M9 1h17v14h-3v5l-5-5H9z" fill="#fff"/><path d="M12 5h11M12 8h11M12 11h8" stroke="#333"/><circle cx="9.500" cy="17.500" r="8.500" fill="#333" stroke="#999"/><text x="6" y="22" font-size="12" fill="#fff">٢</text></svg></button>
    <div dir="rtl" class="ml-2 w-[56px] text-center text-[11px] leading-[18px] whitespace-nowrap"><div>١١:٠١ ص</div><div>٤٥/٠٢/١٠</div></div>
    <span class="ml-[14px] w-[24px]">ع</span>
    <svg class="w-4 h-3" viewBox="0 0 16 12" fill="none" stroke="#fff"><path d="M1 4h2l4-3.500v11L3 8H1zM10 4l5 5M15 4l-5 5"/></svg>
    <svg class="w-[14px] h-[14px] ml-3" viewBox="0 0 14 14" fill="none" stroke="#ccc"><path d="M1 12C1 6 6 1 13 1M4 13c0-5 4-8 9-8M8 13c0-3 2-4 5-4"/><circle cx="12" cy="12.500" r="1" fill="#fff"/></svg>
    <svg class="w-[17px] h-3 ml-[9px]" viewBox="0 0 17 12" fill="#fff"><path d="M5 4h9v5H5z"/><path d="M3.500 2.500h12v8h-12zM15.500 5H17v3h-1.500M1 0v3M4 0v3M0 3h5v2H3v4" fill="none" stroke="#fff"/></svg>
    <svg class="w-[14px] h-2 ml-[10px]" viewBox="0 0 14 8" fill="none" stroke="#fff" stroke-width="1.300"><path d="M1 7l6-6 6 6"/></svg>
    <button class="ml-7 flex items-center text-sm"><span class="size-[21px] rounded-full bg-linear-to-br from-[#fbb034] to-[#ef6a10]"></span><span class="ml-[10px]">29°C</span><span class="ml-[9px]" dir="rtl">مشمس</span></button>

    <div class="ml-auto h-full w-[824px] grid grid-cols-16 [&>button]:flex [&>button]:items-center [&>button]:justify-center">
      <button class="bg-[#4a4a4a] border-b-3 border-[#76b9ed]" aria-label="Excel"><svg class="size-[25px]" viewBox="0 0 25 25"><path d="M6 1h18v22H6z" fill="#21a366"/><path d="M6 12h18v11H6z" fill="#107c41"/><path d="M15 1h9v11h-9z" fill="#33c481"/><path d="M0 6h13v13H0z" fill="#185c37"/><text x="2.500" y="16.500" font-size="11" font-weight="bold" fill="#fff">X</text></svg></button>
      <button aria-label="Y"><span class="size-[18px] bg-[#3a3a3a] text-[11px] leading-[18px]">Y</span></button>
      <button aria-label="Chrome profile"><svg class="size-[26px]" viewBox="0 0 26 26"><use href="#chrome"/><circle cx="19" cy="19" r="6" fill="#8a6a55"/><circle cx="18" cy="18" r="2.500" fill="#d9b08c"/><path d="M15 22l3-2 4 3" stroke="#445" fill="none"/></svg></button>
      <button class="border-b-3 border-[#76b9ed]" aria-label="Browser"><svg class="size-6" viewBox="0 0 24 24"><circle cx="12" cy="12" r="11.500" fill="#f78c1f"/><path d="M4 4a11.500 11.500 0 0 1 19.500 8L12 10z" fill="#7b4fe0"/><path d="M23.500 12A11.500 11.500 0 0 1 9 23l4-9z" fill="#fcd34d"/><path d="M12 5l6 2.500v5c0 3-3 5.500-6 6.500-3-1-6-3.500-6-6.500v-5z" fill="#fff"/><circle cx="12" cy="11" r="1.800" fill="#333"/><path d="M11.300 12h1.400v4h-1.400z" fill="#333"/></svg></button>
      <button aria-label="Opera"><svg class="size-6" viewBox="0 0 24 24"><circle cx="12" cy="12" r="12" fill="#e5162c"/><path d="M17 3a12 12 0 0 1 0 18c5-4 5-14 0-18z" fill="#a70014"/><ellipse cx="12" cy="12" rx="5" ry="8.500" fill="#1c1c1c"/></svg></button>
      <button aria-label="Chrome"><svg class="size-[26px]"><use href="#chrome"/></svg></button>
      <button aria-label="YS"><svg class="size-[25px]" viewBox="0 0 25 25"><rect width="25" height="25" rx="4" fill="#fff"/><path d="M3.500 3.500h17v5M3.500 3.500l6 8v10M3.500 8v13.500h9M9.500 11.500l9-8M3.500 16l6-2M8 3.500l2 8 8-3" fill="none" stroke="#b3202a" stroke-width="1.300"/><text x="12" y="21" font-size="13" font-weight="bold" fill="#333">S</text></svg></button>
      <button aria-label="Document"><svg class="w-[18px] h-[23px]" viewBox="0 0 18 23"><path d="M0 0h13l5 5v18H0z" fill="#f7f7f7"/><path d="M13 0l5 5h-5z" fill="#bbb"/></svg></button>
      <button aria-label="Paint"><svg class="size-[25px]" viewBox="0 0 25 25"><path d="M12 4c8 0 11 4 11 9 0 4-4 4-7 4-2 1 0 6-5 6C5 23 1 19 1 14S5 4 12 4z" fill="#b9dff5"/><circle cx="5" cy="13" r="2" fill="#e33b2e"/><circle cx="8" cy="8.500" r="1.800" fill="#fcc934"/><circle cx="14" cy="7.500" r="1.800" fill="#2da94f"/><circle cx="9" cy="17" r="2.200" fill="#1c3f70"/><path d="M16 24L22 3" stroke="#c98a4b" stroke-width="2.500"/><path d="M19 0l6 1-2 5-3-1z" fill="#e0b080"/></svg></button>
      <button aria-label="Mail"><svg class="w-[25px] h-6" viewBox="0 0 25 24"><path d="M0 9l12.500-9L25 9v6H0z" fill="#0f5ea8"/><path d="M3 8h19v10H3z" fill="#f2f2f2"/><path d="M0 9l12.500 8L25 9v15H0z" fill="#35b8f1"/><path d="M0 24l25-15v15z" fill="#1988d9"/></svg></button>
      <button aria-label="Store"><svg class="w-6 h-[25px]" viewBox="0 0 24 25"><path d="M7 6V1h10v5" fill="none" stroke="#29a9e8" stroke-width="2"/><path d="M0 4h24v18q0 3-3 3H3q-3 0-3-3z" fill="#f5f5f5"/><path d="M7 9h4.500v4.500H7z" fill="#f25022"/><path d="M12.500 9H17v4.500h-4.500z" fill="#7fba00"/><path d="M7 14.500h4.500V19H7z" fill="#00a4ef"/><path d="M12.500 14.500H17V19h-4.500z" fill="#ffb900"/></svg></button>
      <button class="border-b-3 border-[#76b9ed]" aria-label="Explorer"><svg class="w-6 h-5" viewBox="0 0 24 20"><path d="M0 0h9l3 3h11v4H0z" fill="#e09d1c"/><path d="M0 5l10-1 2-1h11v16H0z" fill="#ffd55e"/><path d="M4 19v-7q0-2 2-2h11q2 0 2 2v7h-4v-4H8v4z" fill="#3f90c9"/></svg></button>
      <button aria-label="Edge"><svg class="size-[25px]" viewBox="0 0 25 25"><circle cx="12.500" cy="12.500" r="12.500" fill="#1582cf"/><path d="M1 10C3 2 10 0 14 0c7 0 11 6 11 10 0 5-5 6-9 5 2-3 0-7-4-7-5 0-9 1-11 2z" fill="#35bfc0"/><path d="M14 0c7 0 11 6 11 10 0 5-5 6-9 5l1-4z" fill="#5fd668"/><path d="M9 11c-3 5 2 12 10 10l3-1c-3 5-9 6-13 4C4 21 4 13 9 11z" fill="#0c4f9e"/><path d="M16 15c-1 1 1 3 4 3h4l-2 2c-6 2-11-1-10-6 0-2 2-4 4-3 1 1 1 3 0 4z" fill="#1c1c1c"/></svg></button>
      <button aria-label="Task view"><svg class="w-[18px] h-4" viewBox="0 0 18 16" fill="none" stroke="#ddd"><path d="M5.500 4.500h10v7h-10zM5.500 0v2.500h10V0M5.500 16v-2.500h10V16M1.500 3v13"/><path d="M0 6h3" stroke-width="2"/></svg></button>
      <button aria-label="Search"><svg class="size-6" viewBox="0 0 24 24" fill="none" stroke="#fff" stroke-width="2.500"><circle cx="14.500" cy="9.500" r="8"/><path d="M9 15.500l-8 8"/></svg></button>
      <button aria-label="Start"><svg class="size-[18px]" viewBox="0 0 18 18" fill="#fff"><path d="M0 3l7.500-1v6.500H0zM8.500 1.800L18 .500v8H8.500zM0 9.500h7.500V16L0 15zM8.500 9.500H18v8l-9.500-1.300z"/></svg></button>
    </div>
  </div>

  <!-- watermark -->
  <div class="absolute left-[704px] bottom-[16px] w-[192px] text-center text-[#a8a8a8]/45 font-bold pointer-events-none">
    <div dir="rtl" class="text-[52px] leading-[60px] font-['DejaVu_Sans']">مستقل</div>
    <div class="text-[31px] leading-9 font-['Liberation_Sans']">mostaql.com</div>
  </div>
</body>
</html>
